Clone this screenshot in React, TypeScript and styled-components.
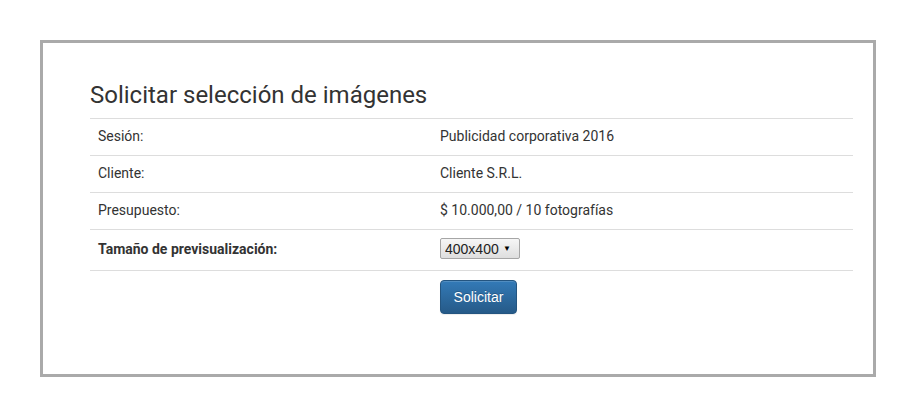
import { FC } from 'react';
import styled, { createGlobalStyle } from 'styled-components';

const GlobalStyle = createGlobalStyle`
  body {
    margin: 0;
    background: #fff;
    font-family: Roboto, "Liberation Sans", Arial, sans-serif;
    font-size: 14px;
    line-height: 1.42857;
    color: #333;
  }
`;

type Row = {
  label: string;
  value: string;
};

const rows: Row[] = [
  { label: 'Sesión:', value: 'Publicidad corporativa 2016' },
  { label: 'Cliente:', value: 'Cliente S.R.L.' },
  { label: 'Presupuesto:', value: '$ 10.000,00 / 10 fotografías' },
];

const App: FC = () => {
  return (
    <>
      <GlobalStyle />
      <Page>
        <Panel>
          <Title>Solicitar selección de imágenes</Title>
          <Table>
            <tbody>
              {rows.map((row) => (
                <tr key={row.label}>
                  <LabelCell>{row.label}</LabelCell>
                  <Cell>{row.value}</Cell>
                </tr>
              ))}
              <tr>
                <LabelCell $bold>Tamaño de previsualización:</LabelCell>
                <Cell>
                  <SelectWrap>
                    <Select defaultValue="400x400">
                      <option>200x200</option>
                      <option>400x400</option>
                      <option>800x800</option>
                    </Select>
                  </SelectWrap>
                </Cell>
              </tr>
              <tr>
                <LabelCell />
                <Cell>
                  <Button type="button">Solicitar</Button>
                </Cell>
              </tr>
            </tbody>
          </Table>
        </Panel>
      </Page>
    </>
  );
};

const Page = styled.div`
  padding: 40px;
`;

const Panel = styled.div`
  border: 3px solid #aaa;
  height: 331px;
  padding: 0 20px 0 47px;
`;

const Title = styled.h3`
  margin: 39px 0 10px;
  font-size: 24px;
  font-weight: 400;
  line-height: 1.1;
  color: #333;
`;

const Table = styled.table`
  width: 100%;
  border-collapse: collapse;
  border-spacing: 0;
  td {
    padding: 8px;
    vertical-align: top;
    border-top: 1px solid #ddd;
  }
`;

const Cell = styled.td``;

const LabelCell = styled.td<{ $bold?: boolean }>`
  width: 326px;
  font-weight: ${(p) => (p.$bold ? 700 : 400)};
  ${(p) => (p.$bold ? 'padding-top: 10px !important;' : '')}
`;

const SelectWrap = styled.span`
  position: relative;
  display: inline-block;
  margin: 0 0 3px;
  &::after {
    content: '▼';
    position: absolute;
    right: 9px;
    top: 6px;
    font-size: 8px;
    line-height: 9px;
    color: #000;
    pointer-events: none;
  }
`;

const Select = styled.select`
  appearance: none;
  -webkit-appearance: none;
  display: block;
  width: 80px;
  height: 21px;
  margin: 0;
  padding: 0 0 0 4px;
  border: 1px solid #a6a6a6;
  border-radius: 2px;
  background: linear-gradient(#f6f6f6, #dedede);
  font-family: "Liberation Sans", Arial, sans-serif;
  font-size: 14px;
  color: #222;
`;

const Button = styled.button`
  display: inline-block;
  margin: 1px 0 0;
  padding: 6px 12px;
  height: 34px;
  width: 77px;
  font-family: "Liberation Sans", Arial, sans-serif;
  font-size: 14px;
  line-height: 20px;
  color: #fff;
  text-shadow: 0 -1px 0 rgba(0, 0, 0, 0.2);
  background: linear-gradient(#337ab7, #265a88);
  border: 1px solid #245580;
  border-radius: 4px;
  box-shadow: inset 0 1px 0 rgba(255, 255, 255, 0.15), 0 1px 1px rgba(0, 0, 0, 0.075);
  cursor: pointer;
`;

export default App;
